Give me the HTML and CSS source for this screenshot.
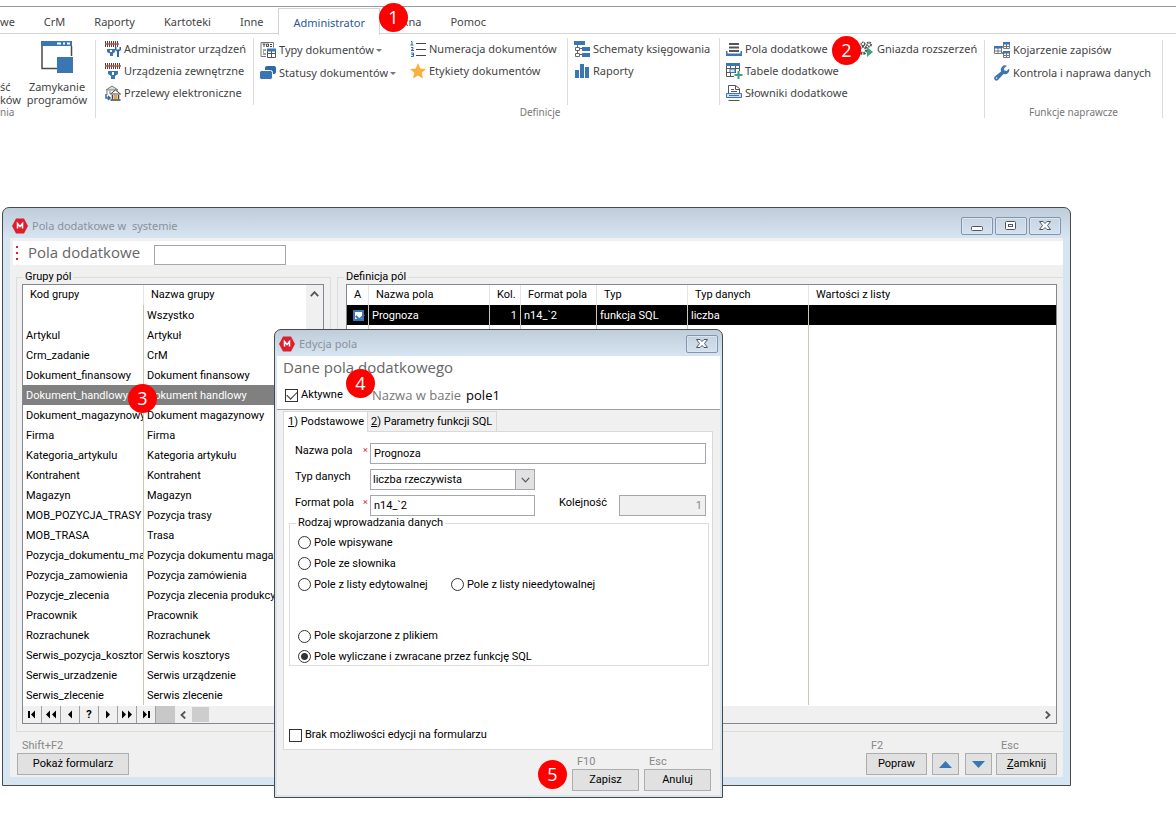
FILE: index.html
```html
<!DOCTYPE html>
<html lang="pl">
<head>
<meta charset="utf-8">
<title>Pola dodatkowe w systemie</title>
<link rel="stylesheet" href="styles.css">
</head>
<body>
<header class="ribbon">
  <nav class="tabs">
    <a class="tab tab-cut" href="#">we</a>
    <a class="tab" href="#">CrM</a>
    <a class="tab" href="#">Raporty</a>
    <a class="tab" href="#">Kartoteki</a>
    <a class="tab" href="#">Inne</a>
    <a class="tab tab-active" href="#">Administrator<span class="step step-1">1</span></a>
    <a class="tab" href="#">Okna</a>
    <a class="tab" href="#">Pomoc</a>
  </nav>
  <div class="groups">
    <section class="group group-start">
      <div class="group-body">
        <button class="big big-cut"><span>ść<br>ków</span></button>
        <button class="big">
          <svg width="32" height="32" viewBox="0 0 32 32"><path d="M1 4V27.500H17M30.500 5V15" fill="none" stroke="#4a4a4a" stroke-width="1.500"/><path d="M0 0h31v5H0z" fill="#3a76b4"/><path d="M16 1.500h4v2h-4zM22 1.500h2v2h-2zM26 1.500h3v2h-3z" fill="#fff"/><path d="M16 16h16v16H16z" fill="#3a76b4"/></svg>
          <span>Zamykanie<br>programów</span>
        </button>
      </div>
      <div class="caption caption-cut">nia</div>
    </section>
    <section class="group group-def">
      <div class="group-body">
        <div class="col col-a">
          <button class="item"><svg class="ico" viewBox="0 0 16 16"><path d="M.5 0v6M2.500 0v6M4.500 0v6M6.500 0v6M8.500 0v6M10.500 0v6M12.500 0v6" stroke="#444" stroke-width="1"/><path d="M0 3h14" stroke="#d8452c" stroke-width="1.500"/><path d="M2 8h8v3l-2 1.500V15H5v-2.500L2 11z" fill="#3a76b4"/><path d="M5 9h2v2H5z" fill="#fff"/><path d="M10 6v3l2 1.500V16h2v-5.500L16 9V6h-1.500v2.500h-3V6z" fill="#2f68a8"/></svg>Administrator urządzeń</button>
          <button class="item"><svg class="ico" viewBox="0 0 16 16"><path d="M.5 0v6M2.500 0v6M4.500 0v6M6.500 0v6M8.500 0v6M10.500 0v6M12.500 0v6M14.500 0v6" stroke="#444" stroke-width="1"/><path d="M0 3h16" stroke="#d8452c" stroke-width="1.500"/><path d="M3 8h10v3l-3 2v3H6v-3l-3-2z" fill="#3a76b4"/><path d="M7 9h2v3H7z" fill="#fff"/></svg>Urządzenia zewnętrzne</button>
          <button class="item"><svg class="ico" viewBox="0 0 16 16"><path d="M1 5l6-4 6 4zM2 6v4M5 6v3" fill="#ddd" stroke="#777" stroke-width="1"/><path d="M5.500 9l5-4 5 4z" fill="#fff" stroke="#444"/><path d="M7.500 10v4M13.500 10v4M5.500 15h10" stroke="#444" stroke-width="1.500"/><path d="M9 10h3v4H9z" fill="#f3a52f"/><path d="M1 9v4h3M3 11l2 2-2 2" fill="none" stroke="#2f68a8" stroke-width="1.500"/></svg>Przelewy elektroniczne</button>
        </div>
        <div class="col col-b loose">
          <button class="item"><svg class="ico" viewBox="0 0 16 16"><path d="M1 .5h12.500v5M1 .5v14h5" fill="none" stroke="#777"/><path d="M2.500 2h3M4 2v3M6.500 2h2v2.500h-2zM10 2.500h2M10 4.500h2" fill="none" stroke="#444"/><path d="M3 8h3M3 10h1M3 12h3" stroke="#444"/><path d="M7.500 7.500h8v8h-8zM7.500 11.500h8M11.500 8v7" fill="#fff" stroke="#555"/><path d="M7 6.500h9v3H7z" fill="#3a76b4"/></svg>Typy dokumentów<i class="drop"></i></button>
          <button class="item"><svg class="ico" viewBox="0 0 16 16"><rect x="5" y="1" width="11" height="8" rx="2" fill="#2f68a8"/><rect x="-.5" y="5.500" width="13" height="9" rx="2" fill="#3a76b4" stroke="#fff"/></svg>Statusy dokumentów<i class="drop"></i></button>
        </div>
        <div class="col col-c">
          <button class="item"><svg class="ico" viewBox="0 0 16 16"><path d="M6 2.500h10M6 8.500h10M6 14.500h10" stroke="#444" stroke-width="1.200"/><path d="M1 .5h1v3.500M.5 4h3M1 6.500h2v1.500l-2 1.500h3M1 12h2.500v3.500H1M1.500 13.500h2" fill="none" stroke="#2f68a8"/></svg>Numeracja dokumentów</button>
          <button class="item"><svg class="ico" viewBox="0 0 16 16"><path d="M8 0l2.300 5.500 5.700.5-4.300 3.800L13 15.500 8 12.500 3 15.500l1.300-5.700L0 6l5.700-.5z" fill="#fbb03b"/></svg>Etykiety dokumentów</button>
        </div>
        <div class="col col-d">
          <button class="item"><svg class="ico" viewBox="0 0 16 16"><path d="M0 0h11v4H0zM8 6h8v4H8zM8 12h8v4H8z" fill="#3a76b4"/><path d="M3.500 4v2M3.500 9v3M5 7.500h3M5 13.500h3M1.500 6.500h4v3h-4zM1.500 12.500h4v3h-4z" fill="none" stroke="#666"/></svg>Schematy księgowania</button>
          <button class="item"><svg class="ico" viewBox="0 0 16 16"><path d="M1 7h4v8H1zM6 1h4v14H6zM11 4h4v11h-4z" fill="#3a76b4"/></svg>Raporty</button>
        </div>
        <div class="col col-e">
          <button class="item"><svg class="ico" viewBox="0 0 16 16"><path d="M3 3h10M3 6.500h10M3 10h10" stroke="#555" stroke-width="2"/><path d="M0 10v5h16v-5h-1.500v2.500h-13V10z" fill="#3a76b4"/></svg>Pola dodatkowe<span class="step step-2">2</span></button>
          <button class="item"><svg class="ico" viewBox="0 0 16 16"><path d="M.5 1.500h13V8M.5 1.500v12H8M.5 9.500H9M4.500 2v11M9.500 2v8M.5 5.500h13" fill="none" stroke="#555"/><path d="M0 0h14v3H0z" fill="#3a76b4"/><path d="M4 6h5v3.500H4z" fill="#dce9f5" stroke="#3a76b4"/><path d="M12.500 8v8M8.500 12h8" stroke="#3aa57c" stroke-width="2"/></svg>Tabele dodatkowe</button>
          <button class="item"><svg class="ico" viewBox="0 0 16 16"><path d="M2.500 8V.5h7l4 3V8M9.500.5v4h4M5 4.500h3M5 6.500h6M2.500 15.500h11" fill="none" stroke="#555"/><path d="M.5 8.500h15v4H.5z" fill="#cfe0f0" stroke="#3a76b4"/><path d="M3 10.500h10" stroke="#3a76b4"/></svg>Słowniki dodatkowe</button>
        </div>
        <div class="col col-f">
          <button class="item"><svg class="ico" viewBox="0 0 16 16"><circle cx="5" cy="9" r="3.500" fill="none" stroke="#555" stroke-width="3" stroke-dasharray="2 1"/><circle cx="5" cy="3" r="1.800" fill="none" stroke="#555" stroke-width="1.500" stroke-dasharray="1.500 .7"/><circle cx="11" cy="3.500" r="2" fill="none" stroke="#555" stroke-width="2" stroke-dasharray="1.500 .7"/><path d="M9 6l6 5-6 5z" fill="#3aa57c"/></svg>Gniazda rozszerzeń</button>
        </div>
      </div>
      <div class="caption">Definicje</div>
    </section>
    <section class="group group-fix">
      <div class="group-body">
        <div class="col col-g loose">
          <button class="item"><svg class="ico" viewBox="0 0 16 16"><path d="M7 7l3-4M7 9l3 4" stroke="#333"/><path d="M.5 4.500h7v7h-7zM4 5v6M1 9h6M9.500.5h6v6h-6zM12.500 1v5M10 4.500h5M9.500 9.500h6v6h-6zM12.500 10v5M10 13.500h5" fill="#fff" stroke="#777"/><path d="M0 4h8v2.500H0zM9 0h7v2.500H9zM9 9h7v2.500H9z" fill="#3a76b4"/></svg>Kojarzenie zapisów</button>
          <button class="item"><svg class="ico" viewBox="0 0 16 16"><path d="M13 .8a4.500 4.500 0 0 0-6 5.800L.8 11.500a2.200 2.200 0 0 0 3.200 3.400l5.500-5.800a4.500 4.500 0 0 0 5.700-5.600L12.500 6 10 5.200 10.200 3z" fill="#3a76b4"/><circle cx="2.600" cy="13" r=".8" fill="#fff"/></svg>Kontrola i naprawa danych</button>
        </div>
      </div>
      <div class="caption">Funkcje naprawcze</div>
    </section>
  </div>
</header>

<main class="window">
  <div class="titlebar">
    <svg class="logo" viewBox="0 0 16 16"><path d="M4 .5h8L16 8l-4 7.500H4L0 8z" fill="#dd1f2b"/><path d="M5.500 10.500v-5l2.500 3 2.500-3v5" fill="none" stroke="#fff" stroke-width="1.500"/></svg>
    <span class="title">Pola dodatkowe w&nbsp; systemie</span>
    <button class="ctl" aria-label="Minimalizuj"><svg width="12" height="12" viewBox="0 0 12 12"><rect x=".5" y="6.500" width="11" height="4" rx="1" fill="#fff" stroke="#4c5666"/></svg></button>
    <button class="ctl" aria-label="Maksymalizuj"><svg width="12" height="12" viewBox="0 0 12 12"><rect x=".5" y="1.500" width="10" height="8" rx="1" fill="#fff" stroke="#4c5666"/><rect x="3.500" y="4.500" width="4" height="2" fill="#fff" stroke="#4c5666"/></svg></button>
    <button class="ctl" aria-label="Zamknij okno"><svg width="12" height="12" viewBox="0 0 12 12"><path d="M.5 1.500h3.500l2 2 2-2h3.500L8.500 5.500l3 4H8l-2-2-2 2H.5l3-4z" fill="#fff" stroke="#4c5666"/></svg></button>
  </div>
  <div class="content">
    <div class="searchbar">
      <svg class="grip" width="3" height="15" viewBox="0 0 3 15"><path d="M0 0h2v2H0zM0 6h2v2H0zM0 12h2v2H0z" fill="#dd1f2b"/></svg>
      <label class="heading" for="q">Pola dodatkowe</label>
      <input class="box search" id="q" type="text">
    </div>
    <div class="panels">
      <fieldset class="frame frame-left">
        <legend>Grupy pól</legend>
        <div class="list">
          <div class="scroll-row">
            <table class="grid">
              <colgroup><col class="c-code"><col></colgroup>
              <thead><tr><th>Kod grupy</th><th>Nazwa grupy</th></tr></thead>
              <tbody>
                <tr><td></td><td>Wszystko</td></tr>
                <tr><td>Artykul</td><td>Artykuł</td></tr>
                <tr><td>Crm_zadanie</td><td>CrM</td></tr>
                <tr><td>Dokument_finansowy</td><td>Dokument finansowy</td></tr>
                <tr class="current"><td>Dokument_handlowy</td><td>Dokument handlowy</td></tr>
                <tr><td>Dokument_magazynowy</td><td>Dokument magazynowy</td></tr>
                <tr><td>Firma</td><td>Firma</td></tr>
                <tr><td>Kategoria_artykulu</td><td>Kategoria artykułu</td></tr>
                <tr><td>Kontrahent</td><td>Kontrahent</td></tr>
                <tr><td>Magazyn</td><td>Magazyn</td></tr>
                <tr><td>MOB_POZYCJA_TRASY</td><td>Pozycja trasy</td></tr>
                <tr><td>MOB_TRASA</td><td>Trasa</td></tr>
                <tr><td>Pozycja_dokumentu_ma</td><td>Pozycja dokumentu magaz</td></tr>
                <tr><td>Pozycja_zamowienia</td><td>Pozycja zamówienia</td></tr>
                <tr><td>Pozycje_zlecenia</td><td>Pozycja zlecenia produkcy</td></tr>
                <tr><td>Pracownik</td><td>Pracownik</td></tr>
                <tr><td>Rozrachunek</td><td>Rozrachunek</td></tr>
                <tr><td>Serwis_pozycja_kosztory</td><td>Serwis kosztorys</td></tr>
                <tr><td>Serwis_urzadzenie</td><td>Serwis urządzenie</td></tr>
                <tr><td>Serwis_zlecenie</td><td>Serwis zlecenie</td></tr>
              </tbody>
            </table>
            <div class="vscroll"><svg width="9" height="6" viewBox="0 0 9 6"><path d="M.8 5.200l3.700-4 3.700 4" fill="none" stroke="#555" stroke-width="1.800"/></svg></div>
          </div>
          <div class="navrow">
            <button class="nav" aria-label="Pierwszy"><svg width="12" height="9" viewBox="0 0 12 9"><path d="M2 1h2v7H2zM9 .5v8l-4-4z"/></svg></button>
            <button class="nav" aria-label="Strona wstecz"><svg width="12" height="9" viewBox="0 0 12 9"><path d="M5 .5v8l-4-4zM11 .5v8l-4-4z"/></svg></button>
            <button class="nav" aria-label="Poprzedni"><svg width="12" height="9" viewBox="0 0 12 9"><path d="M8 .5v8l-4-4z"/></svg></button>
            <button class="nav">?</button>
            <button class="nav" aria-label="Następny"><svg width="12" height="9" viewBox="0 0 12 9"><path d="M4 .5v8l4-4z"/></svg></button>
            <button class="nav" aria-label="Strona dalej"><svg width="12" height="9" viewBox="0 0 12 9"><path d="M1 .5v8l4-4zM7 .5v8l4-4z"/></svg></button>
            <button class="nav" aria-label="Ostatni"><svg width="12" height="9" viewBox="0 0 12 9"><path d="M3 .5v8l4-4zM8 1h2v7H8z"/></svg></button>
            <span class="nav-gap"></span>
            <svg class="arrow" width="6" height="8" viewBox="0 0 6 8"><path d="M5.200.5L1.500 4l3.700 3.500" fill="none" stroke="#555" stroke-width="1.800"/></svg>
            <span class="thumb"></span>
          </div>
        </div>
      </fieldset>
      <fieldset class="frame frame-right">
        <legend>Definicja pól</legend>
        <div class="list">
          <div class="scroll-row">
            <table class="grid defs">
              <colgroup><col class="c-a"><col class="c-name"><col class="c-kol"><col class="c-fmt"><col class="c-typ"><col class="c-name"><col></colgroup>
              <thead><tr><th>A</th><th>Nazwa pola</th><th>Kol.</th><th>Format pola</th><th>Typ</th><th>Typ danych</th><th>Wartości z listy</th></tr></thead>
              <tbody>
                <tr class="picked"><td><input class="mini" type="checkbox" aria-label="Aktywne" checked></td><td>Prognoza</td><td class="num">1</td><td>n14_`2</td><td>funkcja SQL</td><td>liczba</td><td></td></tr>
                <tr class="rest"><td></td><td></td><td></td><td></td><td></td><td></td><td></td></tr>
              </tbody>
            </table>
          </div>
          <div class="navrow navrow-end"><svg width="6" height="8" viewBox="0 0 6 8"><path d="M.8.5L4.500 4 .8 7.500" fill="none" stroke="#555" stroke-width="1.800"/></svg></div>
        </div>
      </fieldset>
    </div>
    <footer class="actions">
      <div class="act act-first"><span class="key">Shift+F2</span><button class="btn w-form">Pokaż formularz</button></div>
      <div class="act act-edit"><span class="key">F2</span><button class="btn w-main">Popraw</button></div>
      <div class="act"><button class="btn w-icon" aria-label="W górę"><svg width="13" height="7" viewBox="0 0 13 7"><path d="M0 7l6.500-7L13 7z" fill="#3a76b4"/></svg></button></div>
      <div class="act act-down"><button class="btn w-icon" aria-label="W dół"><svg width="13" height="7" viewBox="0 0 13 7"><path d="M0 0l6.500 7L13 0z" fill="#3a76b4"/></svg></button></div>
      <div class="act"><span class="key">Esc</span><button class="btn w-main"><span><u>Z</u>amknij</span></button></div>
    </footer>
  </div>
  <span class="step step-3">3</span>

  <form class="dialog">
    <div class="titlebar titlebar-small">
      <svg class="logo" viewBox="0 0 16 16"><path d="M4 .5h8L16 8l-4 7.500H4L0 8z" fill="#dd1f2b"/><path d="M5.500 10.500v-5l2.500 3 2.500-3v5" fill="none" stroke="#fff" stroke-width="1.500"/></svg>
      <span class="title">Edycja pola</span>
      <button class="ctl" type="button" aria-label="Zamknij okno"><svg width="12" height="12" viewBox="0 0 12 12"><path d="M.5 1.500h3.500l2 2 2-2h3.500L8.500 5.500l3 4H8l-2-2-2 2H.5l3-4z" fill="#fff" stroke="#4c5666"/></svg></button>
    </div>
    <div class="dlg-body">
      <div class="dlg-head">
        <h2 class="heading">Dane pola dodatkowego</h2>
        <div class="dlg-sub">
          <label class="opt opt-active"><input class="check" type="checkbox" checked>Aktywne</label>
          <span class="db">Nazwa w bazie</span><span class="db db-name">pole1</span>
        </div>
      </div>
      <div class="dlg-tabs">
        <button class="dtab dtab-on" type="button"><u>1</u>) Podstawowe</button>
        <button class="dtab" type="button"><u>2</u>) Parametry funkcji SQL</button>
      </div>
      <div class="dlg-panel">
        <div class="fields">
          <label for="f-name">Nazwa pola</label><span class="req">×</span>
          <input class="box wide" id="f-name" type="text" value="Prognoza">
          <label for="f-type">Typ danych</label><span></span>
          <span class="combo"><select class="box" id="f-type"><option>liczba rzeczywista</option></select><span class="combo-btn"><svg width="9" height="6" viewBox="0 0 9 6"><path d="M.8.8l3.700 4 3.700-4" fill="none" stroke="#555" stroke-width="1.200"/></svg></span></span>
          <label for="f-fmt">Format pola</label><span class="req">×</span>
          <input class="box" id="f-fmt" type="text" value="n14_`2">
          <label class="l-order" for="f-order">Kolejność</label>
          <input class="box order" id="f-order" type="text" value="1" disabled>
        </div>
        <fieldset class="frame kinds">
          <legend>Rodzaj wprowadzania danych</legend>
          <label class="opt"><input class="radio" type="radio" name="kind">Pole wpisywane</label>
          <label class="opt"><input class="radio" type="radio" name="kind">Pole ze słownika</label>
          <div class="pair">
            <label class="opt"><input class="radio" type="radio" name="kind">Pole z listy edytowalnej</label>
            <label class="opt"><input class="radio" type="radio" name="kind">Pole z listy nieedytowalnej</label>
          </div>
          <label class="opt opt-gap"><input class="radio" type="radio" name="kind">Pole skojarzone z plikiem</label>
          <label class="opt"><input class="radio" type="radio" name="kind" checked>Pole wyliczane i zwracane przez funkcję SQL</label>
        </fieldset>
        <label class="opt opt-lock"><input class="check" type="checkbox">Brak możliwości edycji na formularzu</label>
      </div>
      <div class="actions dlg-actions">
        <div class="act"><span class="key">F10</span><button class="btn w-dlg" type="button">Zapisz</button><span class="step step-5">5</span></div>
        <div class="act"><span class="key">Esc</span><button class="btn w-dlg" type="button">Anuluj</button></div>
      </div>
    </div>
    <span class="step step-4">4</span>
  </form>
</main>
</body>
</html>
```
FILE: styles.css
```css
* { box-sizing: border-box; }
body { display: flow-root; min-height: 100vh; margin: 0; background: #fff; color: #000; font: 11px/14px Roboto, "Liberation Sans", sans-serif; }
button, input, select { font: inherit; color: inherit; margin: 0; border-radius: 0; }
button { padding: 0; border: 0; background: none; }

/* ribbon */
.ribbon { margin-top: 6px; border-top: 1px solid #999; font: 11px/16px "Noto Sans", "Open Sans", sans-serif; color: #444; }
.tabs { display: flex; height: 27px; border-bottom: 1px solid #d4d4d4; }
.tab { padding: 7px 15px 0 14px; color: #444; text-decoration: none; white-space: nowrap; }
.tab-cut { padding-left: 0; }
.tab-active { position: relative; height: 27px; padding-top: 6px; padding-right: 14px; margin-top: 1px; border: 1px solid #d4d4d4; border-bottom: 0; background: #fff; color: #2b579a; }
.groups { display: flex; }
.group { display: flex; flex-direction: column; height: 78px; margin-top: 6px; border-right: 1px solid #dcdcdc; }
.group-body { display: flex; flex: 1; margin-top: -2px; }
.group-start { width: 96px; overflow: hidden; }
.group-def { width: 889px; }
.group-fix { width: 178px; }
.caption { font-size: 10px; line-height: 12px; text-align: center; color: #777; }
.caption-cut { text-align: left; }
.big { display: flex; flex-direction: column; align-items: center; width: 62px; padding-top: 3px; line-height: 13px; white-space: nowrap; gap: 7px; }
.big-cut { width: 26px; padding-top: 42px; align-items: flex-start; text-align: left; }
.col { display: flex; flex-direction: column; height: 67px; padding-left: 9px; gap: 4px; }
.loose { gap: 5px; }
.item { position: relative; display: flex; align-items: center; gap: 3px; height: 18px; white-space: nowrap; }
.col .item:first-child { margin-top: 2px; }
.loose .item:first-child { margin-top: 3px; }
.ico { flex: none; width: 16px; height: 16px; overflow: visible; }
.col-a { width: 158px; border-right: 1px solid #dcdcdc; }
.col-b { width: 150px; padding-left: 6px; }
.col-c { width: 164px; padding-left: 6px; border-right: 1px solid #dcdcdc; }
.col-d { width: 152px; padding-left: 6px; border-right: 1px solid #dcdcdc; }
.col-e { width: 132px; padding-left: 6px; }
.col-f { padding-left: 6px; }
.drop { border: 3px solid transparent; border-top-color: #777; border-bottom: 0; margin-left: -1px; }

/* step markers */
.step { position: absolute; z-index: 5; width: 29px; height: 29px; border-radius: 50%; background: #f00; color: #fff; font: 18px/29px "Open Sans", sans-serif; text-align: center; }
.step-1 { right: -29px; top: -6px; }
.step-2 { right: -9px; top: -4px; }
.step-3 { left: 125px; top: 176px; }
.step-4 { left: 71px; top: 39px; }
.step-5 { left: -34px; bottom: 2px; }

/* windows */
.window { position: relative; margin: 89px 105px 30px 2px; padding: 0 7px 8px; border: 1px solid #4a4a4a; border-radius: 7px 7px 0 0; background: linear-gradient(#bfcddb, #d7e4f2 30px); }
.titlebar { display: flex; align-items: center; gap: 2px; height: 30px; padding: 6px 2px 0 2px; }
.logo { width: 16px; height: 16px; margin-right: 2px; }
.title { flex: 1; font: 11px/16px "Noto Sans", "Open Sans", sans-serif; color: #8b9199; }
.ctl { display: flex; align-items: center; justify-content: center; width: 32px; height: 18px; border: 1px solid #8594ad; border-radius: 2px; box-shadow: inset 0 0 0 1px #dbe5ef; }
.content { background: #f0f0f0; padding-top: 3px; }
.searchbar { display: flex; align-items: center; height: 24px; margin-left: 3px; padding-left: 3px; background: #fff; }
.heading { margin: 0; font: 15px/20px "Open Sans", sans-serif; color: #666; }
.searchbar .heading { width: 126px; margin: 0 0 3px 9px; white-space: nowrap; }
.box { width: 100%; height: 21px; padding: 0 3px; border: 1px solid #a5a7ae; background: #fff; }
.box.search { width: 132px; height: 20px; margin-top: 3px; }
.panels { display: flex; gap: 6px; margin-top: 5px; }
.frame { min-width: 0; margin: 0; padding: 0; border: 1px solid #dcdcdc; }
.frame legend { margin-left: 7px; padding: 0 2px; line-height: 14px; }
.frame-left { width: 315px; margin-left: 6px; padding: 0 6px 7px 5px; }
.frame-right { flex: 1; padding: 0 6px 7px 8px; border-right: 0; }
.frame-left legend { margin-left: 1px; }
.frame-right legend { margin-left: -2px; }
.list { display: flex; flex-direction: column; height: 440px; border: 1px solid #828790; background: #fff; }
.scroll-row { display: flex; flex: 1; align-items: flex-start; }
.grid { flex: 1; width: 100%; border-collapse: separate; border-spacing: 0; table-layout: fixed; }
.grid th, .grid td { height: 20px; padding: 1px 0 0 3px; font-weight: normal; text-align: left; white-space: nowrap; overflow: hidden; border-right: 1px solid #c8c8b4; }
.grid th { padding: 0 0 0 7px; border-color: #e5e5e5; }
.grid th:last-child, .grid td:last-child { border-right: 0; }
.c-code { width: 121px; }
.current td { background: #808080; color: #fff; }
.defs { height: 420px; }
.c-a { width: 22px; }
.c-name { width: 121px; }
.c-kol { width: 31px; }
.c-fmt { width: 76px; }
.c-typ { width: 91px; }
.picked td { background: #000; color: #fff; }
.grid .num { padding-right: 3px; text-align: right; }
.grid .rest td { height: 380px; }
.mini { display: block; appearance: none; width: 11px; height: 11px; margin: 0 0 1px 3px; border: 2px solid #3a76b4; background: #fff; }
.mini::before { content: ""; display: block; width: 6px; height: 4px; margin: 1px 0 0 1px; border: solid #3a76b4; border-width: 0 0 2px 2px; transform: rotate(-45deg); }
.vscroll { align-self: stretch; width: 17px; padding: 6px 4px; background: #f0f0f0; line-height: 6px; }
.navrow { display: flex; align-items: center; height: 17px; background: #f0f0f0; }
.navrow-end { justify-content: flex-end; padding-right: 5px; }
.nav { display: flex; align-items: center; justify-content: center; width: 19px; height: 17px; border-right: 1px solid #a0a0a0; font-weight: bold; }
.nav-gap { width: 19px; height: 17px; background: #c8c8c8; }
.arrow { margin: 0 6px 0 5px; }
.thumb { width: 17px; height: 15px; background: #cdcdcd; }

/* button rows */
.actions { display: flex; align-items: flex-end; gap: 5px; padding: 7px 6px 2px; }
.act { position: relative; display: flex; flex-direction: column; }
.act-first { flex: 1; margin-left: 1px; }
.act-down { margin: 0 -1px 0 1px; }
.key { padding-left: 5px; line-height: 14px; color: #888; }
.btn { display: flex; align-items: center; justify-content: center; height: 22px; border: 1px solid #adadad; background: #e1e1e1; }
.w-form { width: 112px; }
.w-main { width: 61px; }
.w-icon { width: 27px; }
.w-dlg { width: 67px; }

/* dialog */
.dialog { position: absolute; left: 271px; top: 121px; width: 449px; padding: 0 2px 2px; border: 1px solid #4a4a4a; border-radius: 7px 7px 0 0; background: linear-gradient(#bfcddb, #d7e4f2 26px); }
.titlebar-small { height: 26px; padding: 1px 2px 0; }
.dlg-body { background: #f0f0f0; }
.dlg-head { height: 54px; padding: 2px 6px 0; background: #fff; border-bottom: 1px solid #a0a0a0; }
.dlg-head .heading { line-height: 18px; }
.dlg-sub { display: flex; align-items: center; gap: 5px; margin-top: 10px; line-height: 18px; }
.opt { display: flex; align-items: center; gap: 3px; }
.opt-active { width: 82px; margin-left: 2px; }
.db { font: 13px/18px "Open Sans", sans-serif; color: #777; white-space: nowrap; }
.db-name { color: #000; }
.check, .radio { appearance: none; flex: none; width: 13px; height: 13px; border: 1px solid #333; background: #fff; }
.check:checked::before { content: ""; display: block; width: 9px; height: 5px; margin: 1px 0 0 1px; border: solid #333; border-width: 0 0 1px 1px; transform: rotate(-45deg); }
.radio { border-radius: 50%; }
.radio:checked { background: radial-gradient(circle, #333 3px, #fff 4px); }
.dlg-tabs { display: flex; margin: 1px 0 0 6px; }
.dtab { height: 20px; padding: 0 4px 0 3px; border: 1px solid #d9d9d9; border-left: 0; border-bottom: 0; white-space: nowrap; }
.dtab-on { position: relative; height: 21px; margin-bottom: -1px; padding: 0 3px 0 4px; border-left: 1px solid #d9d9d9; background: #fff; }
.dlg-panel { margin: 0 7px 0 6px; padding: 11px 3px 7px 5px; border: 1px solid #d9d9d9; background: #fff; }
.fields { display: grid; grid-template-columns: 68px 7px 165px 84px 87px; row-gap: 5px; padding-left: 6px; justify-content: start; }
.fields label { padding-top: 1px; }
.fields .wide { grid-column: span 3; }
.combo { position: relative; grid-column: span 3; width: 165px; }
.combo .box { appearance: none; padding: 0 2px; }
.combo-btn { position: absolute; right: 0; top: 0; display: flex; align-items: center; justify-content: center; width: 20px; height: 21px; border: 1px solid #a5a7ae; background: #e1e1e1; pointer-events: none; }
.req { color: #d22; font-size: 9px; line-height: 14px; }
.fields .l-order { padding-left: 24px; }
.order:disabled { background: #f0f0f0; color: #888; text-align: right; }
.kinds { height: 150px; padding: 2px 8px 0; }
.kinds legend { margin-left: -2px; }
.kinds .opt { height: 21px; }
.pair { display: flex; }
.pair .opt { width: 153px; white-space: nowrap; }
.kinds .opt-gap { margin-top: 31px; height: 20px; }
.opt-lock { margin-top: 62px; }
.dlg-actions { justify-content: flex-end; padding: 5px 9px 4px; }
```
